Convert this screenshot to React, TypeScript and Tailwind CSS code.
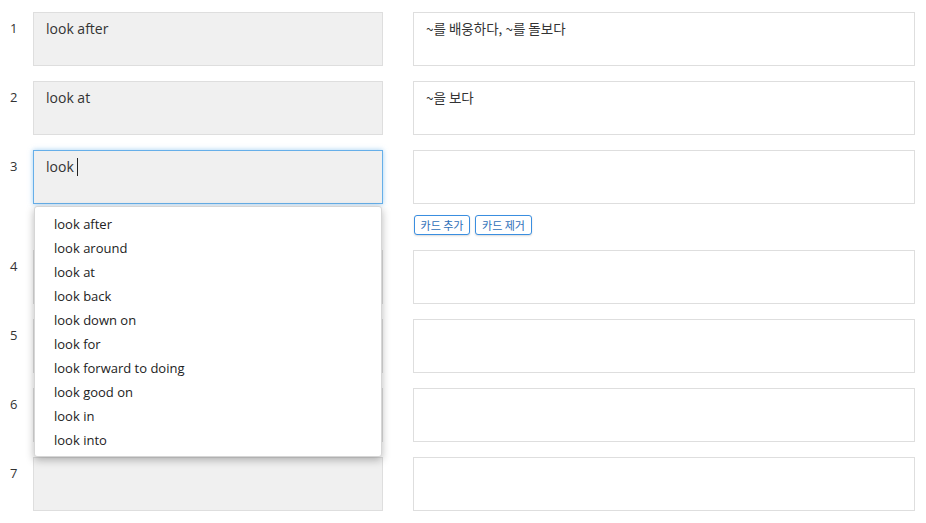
import React from "react";

const items = [
  "look after",
  "look around",
  "look at",
  "look back",
  "look down on",
  "look for",
  "look forward to doing",
  "look good on",
  "look in",
  "look into",
];

type Row = { n: number; en: string; ko: string; active?: boolean };

const rows: Row[] = [
  { n: 1, en: "look after", ko: "~를 배웅하다, ~를 돌보다" },
  { n: 2, en: "look at", ko: "~을 보다" },
  { n: 3, en: "look ", ko: "", active: true },
  { n: 4, en: "", ko: "" },
  { n: 5, en: "", ko: "" },
  { n: 6, en: "", ko: "" },
  { n: 7, en: "", ko: "" },
];

const font = "font-['Open_Sans','Noto_Sans_CJK_KR',sans-serif]";

export default function App() {
  return (
    <div className={`w-[926px] h-[523px] bg-white overflow-hidden pt-[12px] text-[#333] ${font}`}>
      {rows.map((r) => (
        <div key={r.n} className="flex items-start mb-[15px]">
          <div className="w-[33px] pl-[10px] pt-[6px] text-[13px] leading-[20px] text-[#333]">{r.n}</div>
          <div className="relative w-[350px]">
            <div
              className={
                r.active
                  ? "h-[54px] bg-[#f0f0f0] border border-[#66afe9] shadow-[0_0_5px_rgba(102,175,233,0.6)] px-[12px] pt-[6px] text-[14px] leading-[20px]"
                  : "h-[54px] bg-[#f0f0f0] border border-[#dedede] px-[12px] pt-[6px] text-[14px] leading-[20px]"
              }
            >
              <span className="whitespace-pre">{r.en}</span>
              {r.active && <span className="inline-block w-px h-[18px] bg-[#222] align-[-4px]" />}
            </div>
            {r.active && (
              <div className="absolute left-px top-[56px] w-[348px] z-10 bg-white border border-[#d6d6d6] rounded-[3px] shadow-[0_3px_8px_rgba(0,0,0,0.28)] pt-[5px] pb-[4px]">
                {items.map((it) => (
                  <div key={it} className="h-[24px] leading-[24px] pl-[19px] text-[13px] text-[#222]">
                    {it}
                  </div>
                ))}
              </div>
            )}
          </div>
          <div className="ml-[30px] w-[502px]">
            <div className="h-[54px] bg-white border border-[#dedede] px-[12px] pt-[5px] text-[13.5px] leading-[20px] text-[#333] font-['Noto_Sans_CJK_KR',sans-serif]">
              {r.ko}
            </div>
            {r.active && (
              <div className="flex gap-[5px] mt-[11px] ml-px">
                <button className="h-[20px] w-[56px] border border-[#3a8ee0] rounded-[3px] bg-white text-[11px] leading-[18px] text-[#2e6fb8] shadow-[0_1px_2px_rgba(0,0,0,0.15)] font-['Noto_Sans_CJK_KR',sans-serif]">
                  카드 추가
                </button>
                <button className="h-[20px] w-[57px] border border-[#3a8ee0] rounded-[3px] bg-white text-[11px] leading-[18px] text-[#2e6fb8] shadow-[0_1px_2px_rgba(0,0,0,0.15)] font-['Noto_Sans_CJK_KR',sans-serif]">
                  카드 제거
                </button>
              </div>
            )}
          </div>
        </div>
      ))}
    </div>
  );
}
